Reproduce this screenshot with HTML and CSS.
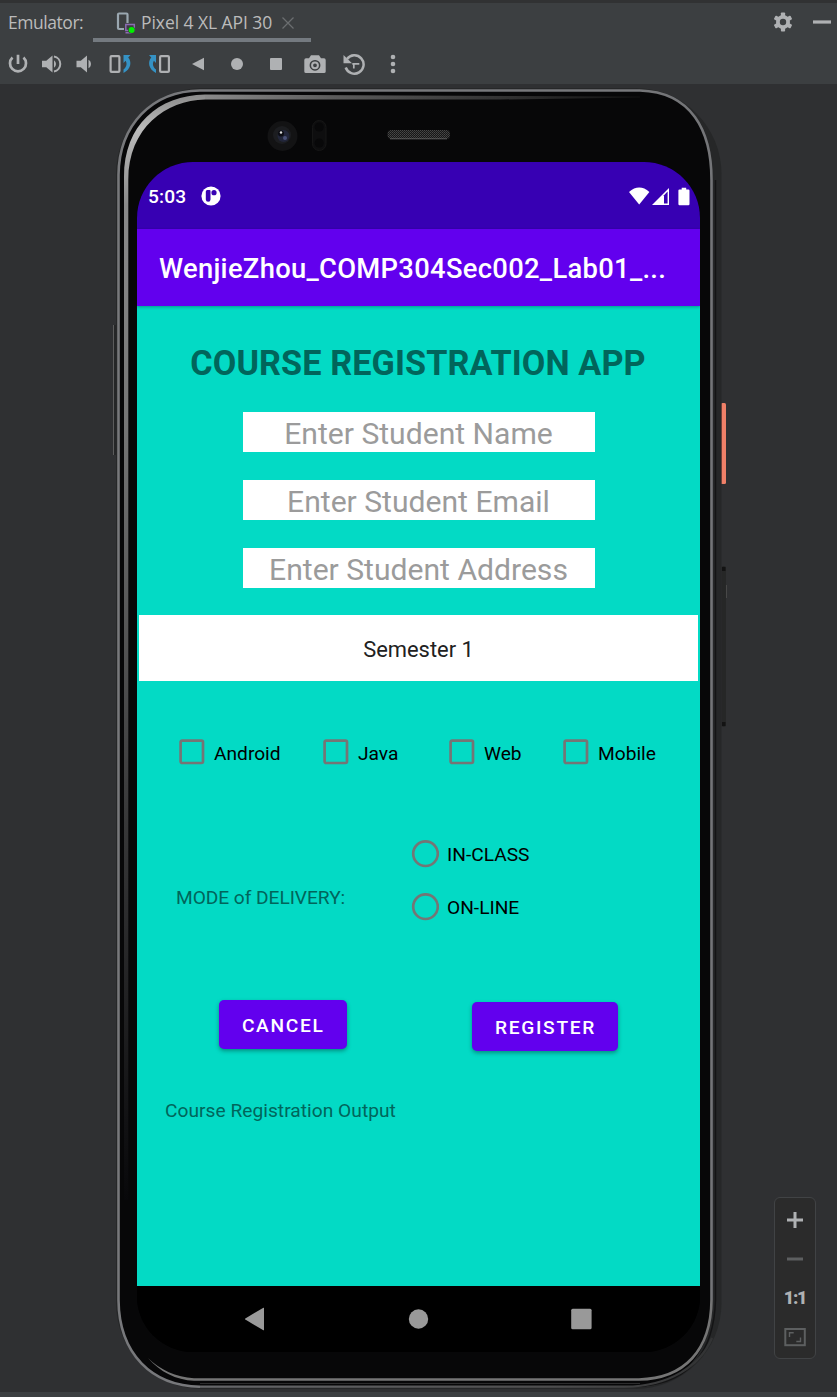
FILE: index.html
```html
<!DOCTYPE html>
<html lang="en">
<head>
<meta charset="utf-8">
<title>Emulator</title>
<link rel="stylesheet" href="styles.css">
</head>
<body>
<header class="tool-window">
  <div class="tabs">
    <span class="tabs-label">Emulator:</span>
    <div class="tab">
      <svg class="tab-icon" width="20" height="22" viewBox="0 0 20 22"><path d="M8 17H3q-1 0-1-1V2.500q0-1 1-1h7.500q1 0 1 1V11" fill="none" stroke="#9aa7b0" stroke-width="2.200"/><path d="M9.800 12.500h8.500v6H9.800zM9.500 20.700h6" fill="none" stroke="#8c6bb3" stroke-width="1.500"/><circle cx="15.600" cy="18" r="3.600" fill="#3c3f41"/><circle cx="15.600" cy="18" r="3" fill="#00f000"/></svg>
      <span class="tab-name">Pixel 4 XL API 30</span>
      <svg class="tab-close" width="12" height="12" viewBox="0 0 12 12"><path d="M.5 .5l11 11M11.500 .5L.5 11.500" stroke="#6b6e70" stroke-width="1.300"/></svg>
    </div>
    <div class="window-actions">
      <svg width="20" height="20" viewBox="0 0 20 20"><g fill="#afb1b3"><circle cx="10" cy="10" r="7"/><rect x="7.900" y=".5" width="4.200" height="19" rx=".8"/><rect x="7.900" y=".5" width="4.200" height="19" rx=".8" transform="rotate(60 10 10)"/><rect x="7.900" y=".5" width="4.200" height="19" rx=".8" transform="rotate(120 10 10)"/></g><circle cx="10" cy="10" r="3.200" fill="#3c3f41"/></svg>
      <svg width="18" height="20" viewBox="0 0 18 20"><path d="M0 10h18" stroke="#afb1b3" stroke-width="3.200"/></svg>
    </div>
  </div>
  <div class="toolbar">
    <svg width="22" height="22" viewBox="0 0 22 22"><path d="M5.500 4.500a8 8 0 1 0 11 0M11 1.800V11" fill="none" stroke="#afb1b3" stroke-width="2.700"/></svg>
    <svg width="22" height="22" viewBox="0 0 22 22"><path d="M1 7.700h4.300L11.500 2.600v16.800L5.300 14.300H1z" fill="#afb1b3"/><path d="M13 7.200a4.600 4.600 0 0 1 0 7.600z" fill="#afb1b3"/><path d="M13 3.600a7.500 7.500 0 0 1 0 14.800" fill="none" stroke="#afb1b3" stroke-width="2"/></svg>
    <svg width="22" height="22" viewBox="0 0 22 22"><path d="M2.500 7.700h4.300L13 2.600v16.800L6.800 14.300H2.500z" fill="#afb1b3"/><path d="M14.500 6.700a5 5 0 0 1 0 8.600z" fill="#afb1b3"/></svg>
    <svg width="24" height="22" viewBox="0 0 24 22"><rect x="2.600" y="3.100" width="8.800" height="15.800" rx="1" fill="none" stroke="#afb1b3" stroke-width="2.200"/><path d="M15.500 2h7l-2.300 2.500c3.600 3.800 3.300 11.500-4.700 15.500v-3.500c3.600-3 3.600-6.500 2.100-8.800l-2.100 2.300z" fill="#3592c4"/></svg>
    <svg width="24" height="22" viewBox="0 0 24 22"><rect x="13.100" y="3.100" width="8.800" height="15.800" rx="1" fill="none" stroke="#afb1b3" stroke-width="2.200"/><path d="M9 2H2l2.300 2.500C.7 8.300 1 16 9 20v-3.500C5.400 13.500 5.400 10 6.900 7.700L9 10z" fill="#3592c4"/></svg>
    <svg width="22" height="22" viewBox="0 0 22 22"><path d="M17 4.800v12.400L5 11z" fill="#afb1b3"/></svg>
    <svg width="22" height="22" viewBox="0 0 22 22"><circle cx="11" cy="11" r="6" fill="#afb1b3"/></svg>
    <svg width="22" height="22" viewBox="0 0 22 22"><rect x="5" y="5" width="12" height="12" rx="1" fill="#afb1b3"/></svg>
    <svg width="22" height="22" viewBox="0 0 22 22"><path fill-rule="evenodd" d="M7 2.200h8l2 3h3q1.700 0 1.700 1.700v11.600q0 1.500-1.700 1.500H2q-1.700 0-1.700-1.500V6.900q0-1.700 1.700-1.700h3zM11 6.900a5.400 5.400 0 1 0 .01 0z" fill="#afb1b3"/><circle cx="11" cy="12.300" r="2.900" fill="none" stroke="#afb1b3" stroke-width="2"/></svg>
    <svg width="22" height="22" viewBox="0 0 22 22"><path d="M4 6A9.200 9.200 0 1 1 2.700 14.500" fill="none" stroke="#afb1b3" stroke-width="2.500"/><path d="M.5 2v8.200H9z" fill="#afb1b3"/><path d="M10.800 15.500V10M9.300 10.800h7" stroke="#afb1b3" stroke-width="1.700"/></svg>
    <svg width="22" height="22" viewBox="0 0 22 22" fill="#afb1b3"><circle cx="11" cy="4" r="2.300"/><circle cx="11" cy="11" r="2.300"/><circle cx="11" cy="18" r="2.300"/></svg>
  </div>
</header>

<main class="stage">
  <div class="phone">
    <svg class="phone-frame" width="620" height="1308" viewBox="110 84 620 1308">
      <defs>
        <linearGradient id="bevel" x1="0" x2="0" y1="95" y2="1200" gradientUnits="userSpaceOnUse"><stop offset="0" stop-color="#8c8c8c"/><stop offset=".03" stop-color="#bbb"/><stop offset=".1" stop-color="#8a8a8a"/><stop offset=".3" stop-color="#757575"/><stop offset=".65" stop-color="#39393a"/><stop offset="1" stop-color="#08080a"/></linearGradient>
        <linearGradient id="topbevel" x1="200" x2="640" y1="0" y2="0" gradientUnits="userSpaceOnUse"><stop offset="0" stop-color="#8c8c8c"/><stop offset=".3" stop-color="#5c5c5c"/><stop offset="1" stop-color="#111"/></linearGradient>
        <linearGradient id="foot" x1="200" x2="700" y1="0" y2="0" gradientUnits="userSpaceOnUse"><stop offset="0" stop-color="#66676a"/><stop offset=".7" stop-color="#4e4e4f"/><stop offset="1" stop-color="#333435"/></linearGradient>
        <pattern id="mesh" width="2" height="2" patternUnits="userSpaceOnUse"><rect width="2" height="2" fill="#171717"/><rect width="1" height="1" fill="#484848"/><rect x="1" y="1" width="1" height="1" fill="#3c3c3c"/></pattern>
      </defs>
      <rect x="721" y="403" width="5" height="81" rx="1.500" fill="#f08068"/><path d="M721.500 404v79" stroke="#b45c4a"/>
      <rect x="721.500" y="566" width="4.500" height="161" rx="2" fill="#262727"/><path d="M722 567h3.500v4H722zM722 722h3.500v4H722z" fill="#131313"/><path d="M726.500 585v13" stroke="#484848"/>
      <path d="M113.500 325v130" stroke="#5c5c5c"/><path d="M115 325v130" stroke="#1c1c1c"/>
      <rect x="116" y="88" width="605.500" height="1301" rx="86" fill="#262728"/>
      <path d="M200 91H640C691 92 711.500 130 712 180V1300C711.500 1353 684 1384 639 1387H200C152 1386 119 1352 118.500 1300V175C119 125 152 92 200 91z" fill="#070708"/>
      <path d="M715.500 180V1300C714 1353 688 1382 645 1385.500" fill="none" stroke="#141415" stroke-width="1.500"/>
      <path d="M640 90.500H200C152 91 119 125 118.500 175V1300C119 1354 152 1386 200 1386.700" fill="none" stroke="#77787b" stroke-width="2.600"/>
      <path d="M200 1386.700H625C670 1386 700 1366 712 1338" fill="none" stroke="url(#foot)" stroke-width="2.200"/>
      <path d="M200 1383.500H640" stroke="#2c2c2d"/>
      <path d="M640 90.500C691 92 711.500 130 711.500 180V1300" fill="none" stroke="#747578" stroke-width="2.600"/>
      <path d="M711.500 1300C711 1351 684 1378.500 639 1379.500H194" fill="none" stroke="#757575" stroke-width="2.600"/>
      <path d="M194 1380.800V1378.200C176 1377 160 1370 148 1358 160 1372 176 1380 194 1380.800z" fill="#757575"/>
      <path d="M124 1200V177C124 125 158 95.500 205 94.500V99.500C166 100 128.300 128 128.300 180V1200z" fill="url(#bevel)"/>
      <path d="M205 94.500L640 96.500V97.500L500 99.500H205z" fill="url(#topbevel)"/>
      <circle cx="282.500" cy="136" r="15" fill="#131314"/><circle cx="282" cy="135" r="9" fill="#1c1d20"/><circle cx="283.500" cy="136" r="6" fill="#22263a"/><circle cx="281" cy="133.500" r="3" fill="#0c0d14"/><circle cx="281" cy="132.500" r="1.200" fill="#ddd"/><circle cx="285" cy="138" r="2" fill="#4a5278"/>
      <rect x="312.500" y="120.500" width="13.500" height="30" rx="6.700" fill="#0e0e0f" stroke="#161616"/><circle cx="319.200" cy="127" r="4.500" fill="#080809"/><circle cx="319.200" cy="143" r="4.500" fill="#080809"/>
      <rect x="387.500" y="130" width="62.500" height="9" rx="4" fill="url(#mesh)"/><path d="M390 138.800h57" stroke="#5c5c5c"/>
    </svg>

    <div class="screen">
      <div class="status-bar">
        <span class="clock">5:03</span>
        <svg class="status-app" width="20" height="20" viewBox="0 0 20 20"><circle cx="10" cy="10" r="9.600" fill="#fff"/><path d="M4.800 5.500q0-1.500 1.500-1.500h2.200q1 0 1 1v8.500q0 2.300-2.300 2.300t-2.400-2.300z" fill="#3700b3"/><circle cx="13" cy="6.700" r="2.600" fill="#3700b3"/></svg>
        <svg class="status-icons" width="61" height="19" viewBox="0 0 61 19"><path d="M0 5q10.200-8.800 20.400 0L10.200 17.500z" fill="#fff"/><path d="M23 18L40 1v17z" fill="#fff"/><path d="M35 8.200l3.600-3.600V16.500H35z" fill="#3700b3"/><path d="M49.400 3.500q0-1.100 1.100-1.100h2.200V.7h4.500v1.700h2.200q1.100 0 1.100 1.100v13.600q0 1.200-1.100 1.200h-8.900q-1.100 0-1.100-1.200z" fill="#fff"/></svg>
      </div>
      <div class="app-bar"><span class="app-title">WenjieZhou_COMP304Sec002_Lab01_...</span></div>
      <section class="content">
        <h1 class="title">COURSE REGISTRATION APP</h1>
        <div class="fields">
          <div class="field">Enter Student Name</div>
          <div class="field">Enter Student Email</div>
          <div class="field">Enter Student Address</div>
        </div>
        <div class="spinner">Semester 1</div>
        <div class="checks">
          <label class="option"><svg class="box" width="26" height="26" viewBox="0 0 26 26"><rect x="1.600" y="1.600" width="22.400" height="22.400" rx="1.500"/></svg><span>Android</span></label>
          <label class="option"><svg class="box" width="26" height="26" viewBox="0 0 26 26"><rect x="1.600" y="1.600" width="22.400" height="22.400" rx="1.500"/></svg><span>Java</span></label>
          <label class="option"><svg class="box" width="26" height="26" viewBox="0 0 26 26"><rect x="1.600" y="1.600" width="22.400" height="22.400" rx="1.500"/></svg><span>Web</span></label>
          <label class="option"><svg class="box" width="26" height="26" viewBox="0 0 26 26"><rect x="1.600" y="1.600" width="22.400" height="22.400" rx="1.500"/></svg><span>Mobile</span></label>
        </div>
        <div class="delivery">
          <span class="delivery-label">MODE of DELIVERY:</span>
          <div class="radios">
            <label class="option"><svg class="box" width="28" height="28" viewBox="0 0 28 28"><circle cx="14.500" cy="13.700" r="12.300"/></svg><span>IN-CLASS</span></label>
            <label class="option"><svg class="box" width="28" height="28" viewBox="0 0 28 28"><circle cx="14.500" cy="13.700" r="12.300"/></svg><span>ON-LINE</span></label>
          </div>
        </div>
        <div class="actions">
          <button class="btn btn-cancel">CANCEL</button>
          <button class="btn btn-register">REGISTER</button>
        </div>
        <p class="output">Course Registration Output</p>
      </section>
      <nav class="nav-bar">
        <svg width="22" height="24" viewBox="0 0 22 24"><path d="M20 1v22q0 .5-.6.300L1.300 12.600q-.8-.6 0-1.200L19.400.7q.6-.2.600.300z" fill="#999"/></svg>
        <svg width="22" height="24" viewBox="0 0 22 24"><circle cx="11.500" cy="12" r="9.700" fill="#999"/></svg>
        <svg width="22" height="24" viewBox="0 0 22 24"><rect x="1.200" y="1.800" width="20.400" height="20.400" rx="1.500" fill="#999"/></svg>
      </nav>
    </div>
  </div>

  <aside class="zoom-panel">
    <svg width="22" height="22" viewBox="0 0 22 22"><path d="M11 3v16M3 11h16" stroke="#afb1b3" stroke-width="3"/></svg>
    <svg width="22" height="22" viewBox="0 0 22 22"><path d="M3 11h16" stroke="#5d5f60" stroke-width="3"/></svg>
    <span class="zoom-ratio">1:1</span>
    <svg width="22" height="22" viewBox="0 0 22 22" fill="none" stroke="#5d5f60"><rect x="1.300" y="3" width="19.500" height="16.200" stroke-width="2"/><path d="M5.500 11V6.800h4.200M16.500 11.500v4h-4.200" stroke-width="1.400"/></svg>
  </aside>
</main>
<footer class="bottom-edge"></footer>
</body>
</html>
```

FILE: styles.css
```css
* { box-sizing: border-box; }
body {
  margin: 0;
  width: 837px;
  height: 1397px;
  overflow: hidden;
  display: flex;
  flex-direction: column;
  background: #2f3032;
  font-family: Roboto, "Liberation Sans", sans-serif;
}
svg { display: block; flex: none; }

.tool-window {
  height: 84px;
  flex: none;
  background: #3c3f41;
  border-top: 3px solid #313233;
  color: #bbb;
  font-family: "Open Sans", "Noto Sans", sans-serif;
}
.tabs { display: flex; height: 39px; padding-left: 8px; font-size: 17.500px; line-height: 38px; }
.tabs-label { width: 85px; letter-spacing: -.45px; white-space: nowrap; }
.tab {
  display: flex;
  align-items: center;
  width: 218px;
  padding-left: 23px;
  border-bottom: 4px solid #747a80;
}
.tab-icon { margin-top: 5px; }
.tab-name { width: 131px; margin: 2px 10px 0 5px; letter-spacing: -.07px; white-space: nowrap; }
.tab-close { margin-top: 4px; }
.window-actions { display: flex; gap: 20px; margin-left: auto; padding: 9px 5px 0 0; }
.window-actions svg + svg { margin-right: 1px; }
.toolbar {
  display: grid;
  grid-template-columns: 34px 34px 31px 39px 39px 39px 39px 39px 39px 39px 39px;
  margin-left: 1px;
  padding-top: 11px;
  justify-items: center;
}

.stage { position: relative; flex: 1; display: flex; }
.phone { position: relative; width: 620px; margin-left: 110px; padding: 78px 30px 0 27px; }
.phone-frame { position: absolute; left: 0; top: 0; }
.screen {
  position: relative;
  display: flex;
  flex-direction: column;
  width: 563px;
  height: 1190px;
  border-radius: 56px;
  overflow: hidden;
  background: #000;
}
.status-bar { display: flex; align-items: center; height: 67px; padding: 1px 10px 0 11px; background: #3700b3; color: #fff; }
.clock { padding-top: 1px; font-size: 19.160px; font-weight: 500; letter-spacing: .1px; }
.status-app { margin-left: 15px; }
.status-icons { margin-left: auto; }
.app-bar {
  position: relative;
  display: flex;
  align-items: center;
  height: 77px;
  padding: 3px 0 0 22px;
  background: #6200ee;
  color: #fff;
  box-shadow: 0 1px 3px rgba(0, 0, 0, .3);
}
.app-title { font-size: 27.370px; font-weight: 500; letter-spacing: .3px; white-space: nowrap; }
.content { height: 980px; background: #03dac5; }
.title { margin: 0; padding: 37px 1px 0 0; font-size: 34.200px; line-height: 40px; font-weight: 700; letter-spacing: .1px; text-align: center; color: #01655b; white-space: nowrap; }
.fields { display: flex; flex-direction: column; align-items: center; gap: 27.700px; padding-top: 29px; }
.field { width: 352px; height: 40.200px; background: #fff; color: #9b9b9b; font-size: 30.100px; line-height: 43px; text-align: center; }
.spinner { height: 66px; margin: 27px 2px 0; background: #fff; color: #212121; font-size: 21.900px; line-height: 69px; text-align: center; }
.option { display: flex; align-items: center; font-size: 19.160px; line-height: 26px; color: #000; white-space: nowrap; }
.option span { padding-top: 2px; }
.box { fill: none; stroke: #757575; stroke-width: 2.700px; margin: 1px 9px 1px 0; }
.checks { display: grid; grid-template-columns: 144px 126px 114px auto; padding: 57px 0 0 42px; }
.checks span { padding-top: 3px; }
.delivery { display: grid; grid-template-columns: 235px auto; padding: 72px 0 0 39px; }
.delivery-label { padding-top: 46px; font-size: 19.160px; line-height: 26px; letter-spacing: -.05px; color: #01655b; }
.radios { display: grid; gap: 23px; }
.radios .box { margin-right: 8px; }
.actions { display: flex; align-items: flex-start; gap: 125.500px; padding: 78px 0 0 82px; }
.btn {
  height: 49px;
  padding: 2px 0 0 1px;
  border: 0;
  border-radius: 5px;
  background: #6200ee;
  color: #fff;
  font: 500 19.160px/47px Roboto, sans-serif;
  letter-spacing: 1.710px;
  box-shadow: 0 2px 4px rgba(0, 0, 0, .35);
}
.btn-cancel { width: 127.500px; }
.btn-register { width: 146px; margin-top: 2px; }
.output { margin: 0; padding: 47px 0 0 28px; font-size: 19.160px; line-height: 26px; letter-spacing: .03px; color: #01655b; }
.nav-bar { display: flex; align-items: center; gap: 141px; height: 66px; padding-left: 107px; background: #000; }

.zoom-panel {
  display: flex;
  flex-direction: column;
  align-items: center;
  gap: 17px;
  width: 42px;
  height: 162px;
  margin: 1113px 0 0 44px;
  padding-top: 11px;
  border: 1.500px solid #414345;
  border-radius: 6px;
  background: #2b2b2b;
}
.zoom-ratio { height: 22px; font: 900 18px/22px Roboto, sans-serif; letter-spacing: -1.200px; color: #afb1b3; }
.bottom-edge { height: 5px; flex: none; background: #3c3f41; }
```
